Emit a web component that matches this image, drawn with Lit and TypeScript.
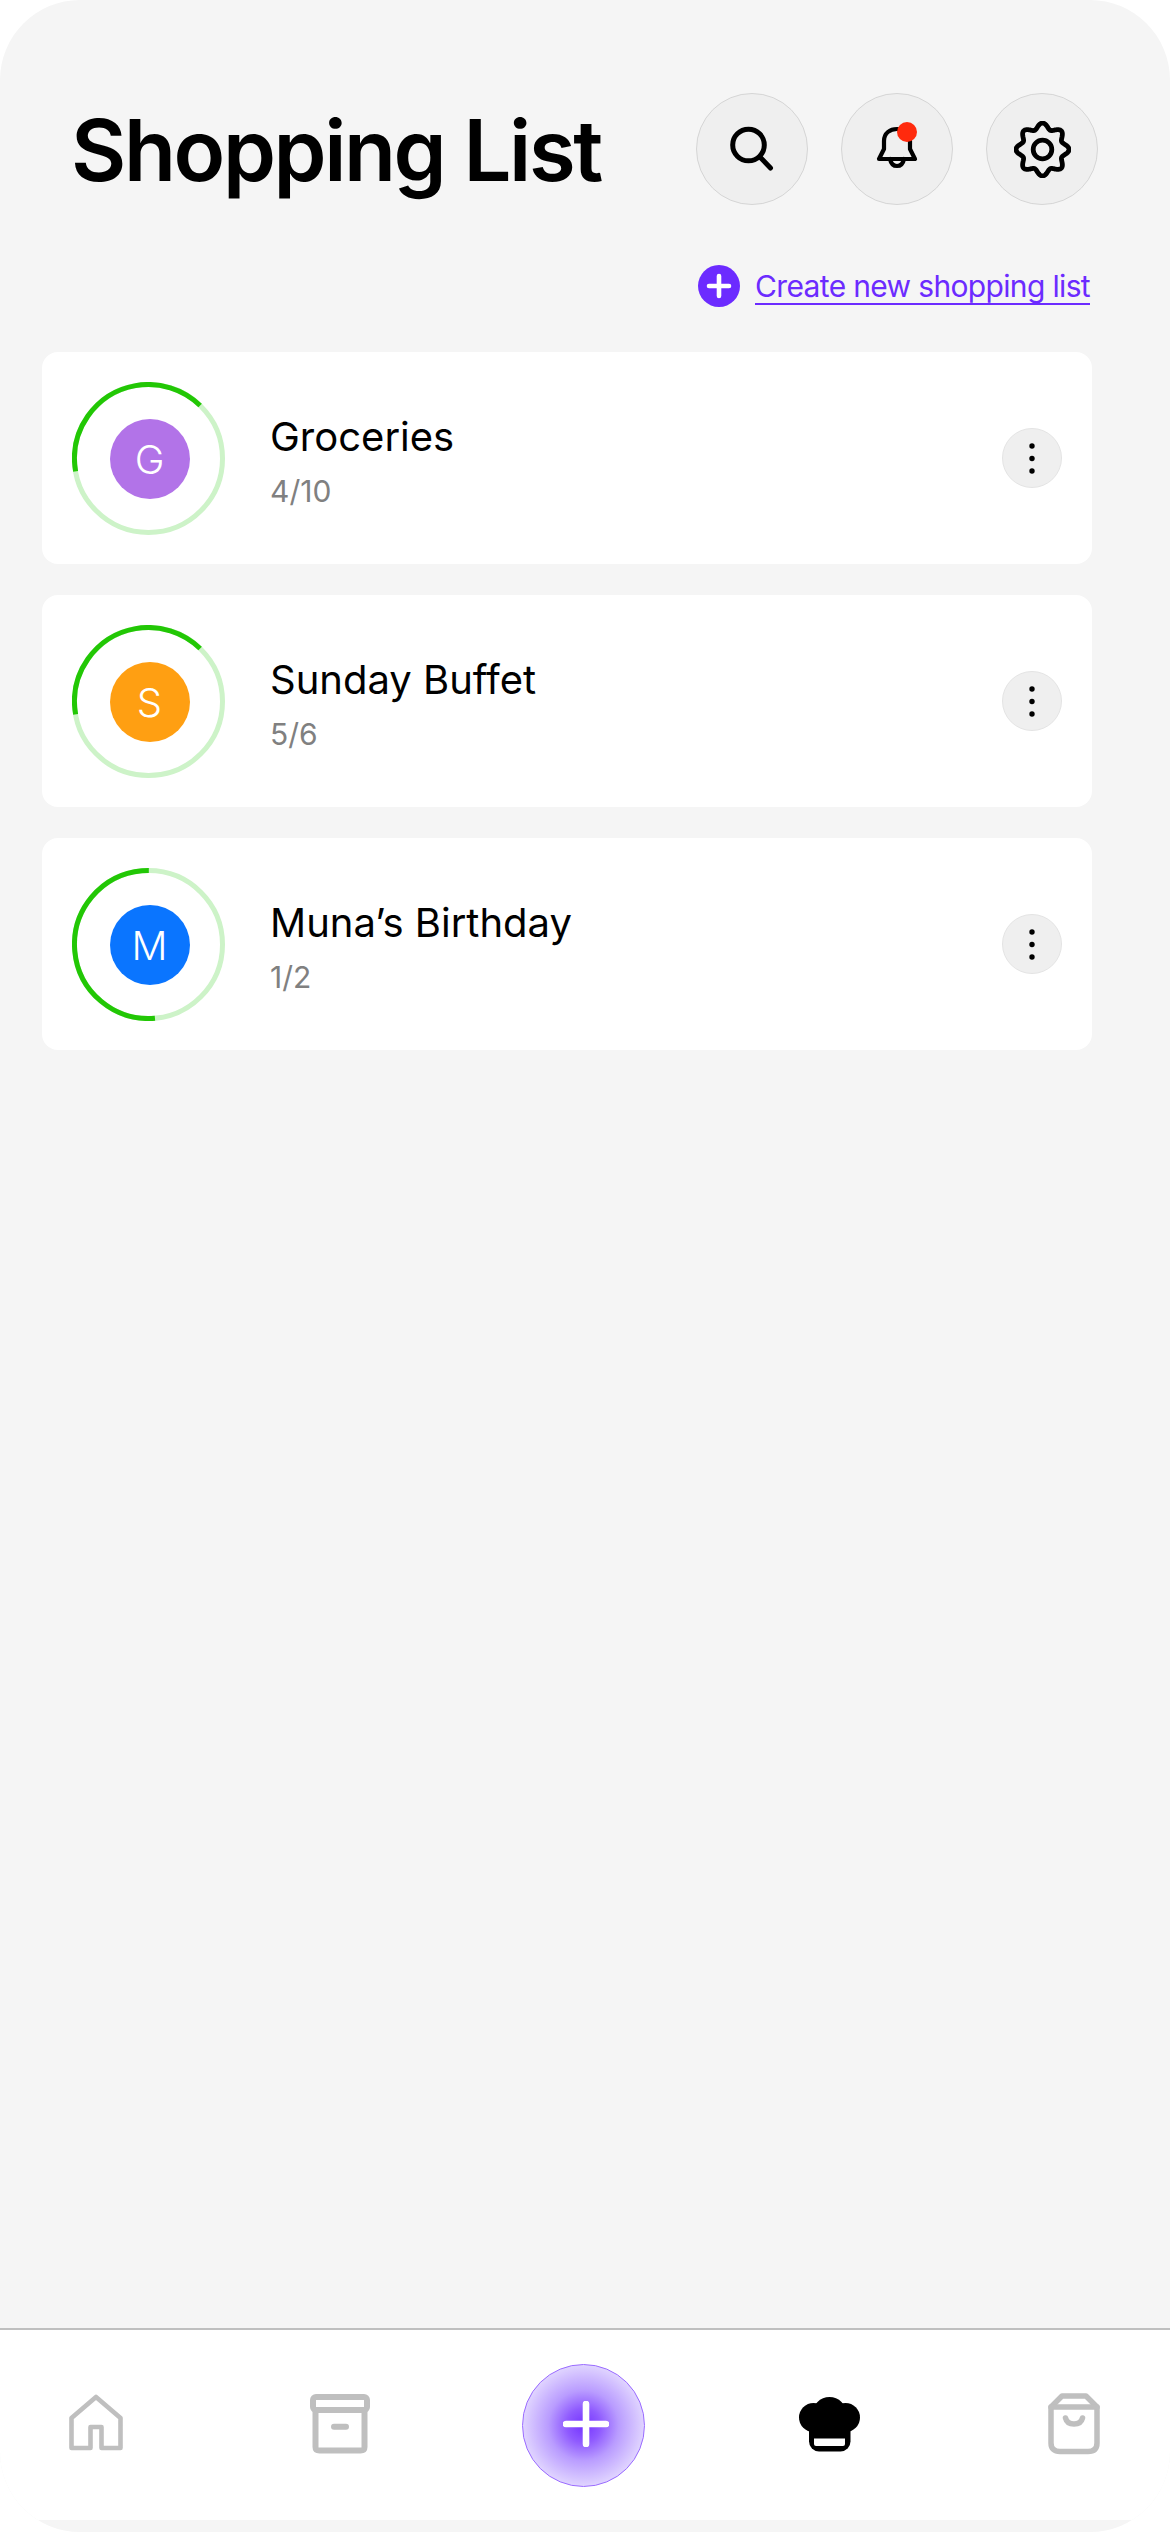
import { LitElement, html, css } from "lit";
import { customElement } from "lit/decorators.js";

const CIRC = 2 * Math.PI * 74;
const lists = [
  { name: "Groceries", count: "4/10", letter: "G", color: "#b273e8", start: -100, pct: 0.4 },
  { name: "Sunday Buffet", count: "5/6", letter: "S", color: "#ff9f12", start: -100, pct: 0.4 },
  { name: "Muna’s Birthday", count: "1/2", letter: "M", color: "#0a75ff", start: 175, pct: 0.514 },
];

function gearPath(): string {
  const pts: string[] = [];
  for (let i = 0; i < 240; i++) {
    const t = (i / 240) * Math.PI * 2;
    const r = 23.6 + 2.9 * Math.cos(8 * t);
    const x = 28.5 + r * Math.sin(t);
    const y = 28.5 - r * Math.cos(t);
    pts.push(`${x.toFixed(2)} ${y.toFixed(2)}`);
  }
  return `M${pts.join("L")}Z`;
}

@customElement("app-root")
export class AppRoot extends LitElement {
  static styles = css`
    :host { display: block; width: 1170px; height: 2532px; background: #fff; font-family: Inter, "Liberation Sans", sans-serif; }
    .screen { width: 1170px; height: 2532px; background: #f5f5f5; border-radius: 80px; overflow: hidden; display: flex; flex-direction: column; box-sizing: border-box; }
    .head { display: flex; align-items: center; justify-content: space-between; padding: 93px 72px 0 71px; height: 112px; }
    h1 { margin: 3px 0 0; font-size: 85px; font-weight: 600; line-height: 112px; color: #000; letter-spacing: -2.4px; white-space: nowrap; }
    .actions { display: flex; gap: 33px; }
    .circle { position: relative; width: 112px; height: 112px; border-radius: 50%; background: #efefef; border: 1px solid #d5d5d5; box-sizing: border-box; display: flex; align-items: center; justify-content: center; }
    .dot { position: absolute; left: 55px; top: 28px; width: 20px; height: 20px; border-radius: 50%; background: #ff2a0d; }
    .create { display: flex; align-items: center; justify-content: flex-end; gap: 15px; margin: 60px 80px 0 0; height: 42px; }
    .create a { color: #6c2bff; font-size: 30px; line-height: 34px; letter-spacing: -0.66px; border-bottom: 2px solid #6c2bff; white-space: nowrap; margin-top: 1px; }
    .list { display: flex; flex-direction: column; gap: 31px; margin: 45px 78px 0 42px; flex: 1; }
    .card { height: 212px; background: #fff; border-radius: 16px; display: flex; align-items: center; padding: 0 30px; box-sizing: border-box; }
    .ring { position: relative; width: 153px; height: 153px; flex: none; display: flex; align-items: center; justify-content: center; }
    .ring svg { position: absolute; inset: 0; }
    .avatar { width: 80px; height: 80px; border-radius: 50%; color: #fff; font-size: 40px; font-weight: 300; display: flex; align-items: center; justify-content: center; margin: 2px 0 0 2px; }
    .info { flex: 1; margin-left: 45px; display: flex; flex-direction: column; gap: 12px; margin-top: 5px; }
    .name { font-size: 40px; line-height: 48px; color: #000; white-space: nowrap; }
    .count { font-size: 30px; line-height: 36px; color: #808080; }
    .more { width: 60px; height: 60px; border-radius: 50%; background: #efefef; border: 1px solid #e4e4e4; box-sizing: border-box; display: flex; align-items: center; justify-content: center; }
    nav { height: 192px; background: #fff; border-top: 2px solid #bfbfbf; box-sizing: border-box; margin-bottom: 12px; flex: none; display: flex; align-items: center; padding: 0 0 2px 69px; }
    nav svg { flex: none; }
    .wide { margin-left: 187px; }
    .mid { margin-left: 152px; }
    .midr { margin-left: 154px; }
    .bag { margin-left: 188px; }
    .home { margin-bottom: 3px; }
    .fab { width: 123px; height: 123px; border-radius: 50%; border: 1px solid #9a6bff; box-sizing: border-box; background: radial-gradient(circle closest-side, #7433ff 0%, #8f5aff 28%, #b99cff 58%, #e0d4ff 100%); display: flex; align-items: center; justify-content: center; margin-top: 2px; flex: none; }
    .fab svg { margin: -2px 0 0 4px; }
  `;

  private ring(start: number, pct: number) {
    return html`<svg width="153" height="153" viewBox="0 0 153 153" fill="none">
      <circle cx="76.5" cy="76.5" r="74" stroke="#cdf3c8" stroke-width="5"></circle>
      <circle cx="76.5" cy="76.5" r="74" stroke="#22c705" stroke-width="5"
        stroke-dasharray="${pct * CIRC} ${CIRC}" transform="rotate(${start - 90} 76.5 76.5)"></circle>
    </svg>`;
  }

  render() {
    return html`<div class="screen">
      <div class="head">
        <h1>Shopping List</h1>
        <div class="actions">
          <div class="circle"><svg width="46" height="46" viewBox="0 0 46 46" fill="none" stroke="#000" stroke-width="5" stroke-linecap="round"><circle cx="19.5" cy="19" r="15.8"></circle><path d="M31 31 41.5 42"></path></svg></div>
          <div class="circle"><svg width="42" height="50" viewBox="0 0 42 50" fill="none" stroke="#000" stroke-width="4.2" stroke-linecap="round" stroke-linejoin="round"><path d="M3 35 8 25V17C8 9 14 5 21 5S34 9 34 17V25L39 35Z"></path><path d="M14 35c1 5 4 7 7 7s6-2 7-7"></path></svg><span class="dot"></span></div>
          <div class="circle"><svg width="57" height="57" viewBox="0 0 57 57" fill="none" stroke="#000" stroke-width="4.8" stroke-linejoin="round"><circle cx="28.5" cy="28.5" r="9.3"></circle><path d="${gearPath()}"></path></svg></div>
        </div>
      </div>
      <div class="create">
        <svg width="42" height="42" viewBox="0 0 42 42"><circle cx="21" cy="21" r="21" fill="#6c2bff"></circle><path d="M11 21h20M21 11v20" stroke="#fff" stroke-width="4.6" stroke-linecap="round"></path></svg>
        <a>Create new shopping list</a>
      </div>
      <div class="list">
        ${lists.map((l) => html`<div class="card">
          <div class="ring">${this.ring(l.start, l.pct)}<div class="avatar" style="background:${l.color}">${l.letter}</div></div>
          <div class="info"><div class="name">${l.name}</div><div class="count">${l.count}</div></div>
          <div class="more"><svg width="6" height="31" viewBox="0 0 6 31" fill="#000"><circle cx="3" cy="3" r="2.7"></circle><circle cx="3" cy="15.5" r="2.7"></circle><circle cx="3" cy="28" r="2.7"></circle></svg></div>
        </div>`)}
      </div>
      <nav>
        <svg class="home" width="54" height="57" viewBox="0 0 54 57" fill="none" stroke="#bfbfbf" stroke-width="4.6" stroke-linejoin="round"><path d="M2.5 24 27 3 51.5 24V54H32.5V33H21.5V54H2.5Z"></path></svg>
        <svg class="wide" width="60" height="60" viewBox="0 0 60 60" fill="none" stroke="#bfbfbf" stroke-width="6" stroke-linejoin="round" stroke-linecap="round"><rect x="3" y="3" width="54" height="13" rx="3"></rect><path d="M5.5 16V53q0 3.5 4 3.5H50.5q4 0 4-3.5V16"></path><path d="M24 32.7H36"></path></svg>
        <div class="fab mid"><svg width="46" height="46" viewBox="0 0 46 46" stroke="#fff" stroke-width="6.6" stroke-linecap="round"><path d="M23 3v40M3 23h40"></path></svg></div>
        <svg class="midr" width="61" height="55" viewBox="0 0 61 55"><circle cx="14.5" cy="20.5" r="14.5" fill="#000"></circle><circle cx="46.5" cy="20.5" r="14.5" fill="#000"></circle><circle cx="30.5" cy="17" r="17" fill="#000"></circle><rect x="10" y="14" width="41.5" height="40.5" rx="10" fill="#000"></rect><path d="M15 41.5H46V47a2 2 0 0 1-2 2H17a2 2 0 0 1-2-2Z" fill="#fff"></path></svg>
        <svg class="bag" width="52" height="62" viewBox="0 0 52 62" fill="none" stroke="#bfbfbf" stroke-width="5.5" stroke-linecap="round" stroke-linejoin="round"><path d="M3 14 14 3H38L49 14V50Q49 58.5 40 58.5H12Q3 58.5 3 50Z"></path><path d="M3 14H49"></path><path d="M17.5 25C18.5 29 21.5 31 26 31S33.5 29 34.5 25"></path></svg>
      </nav>
    </div>`;
  }
}
